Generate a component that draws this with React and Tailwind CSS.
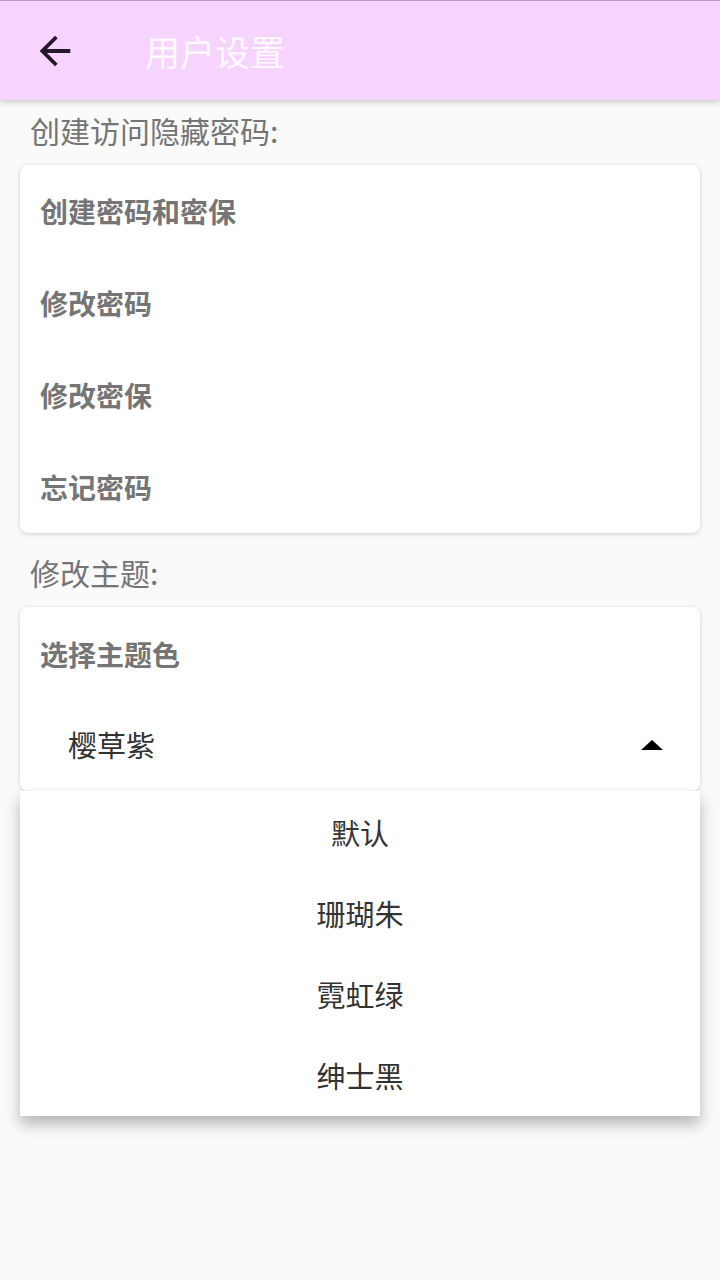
import { useState } from 'react'

const FONT = { fontFamily: '"Noto Sans CJK SC", "Noto Sans", sans-serif' }

const passwordItems = ['创建密码和密保', '修改密码', '修改密保', '忘记密码']
const themes = ['默认', '珊瑚朱', '霓虹绿', '绅士黑']

export default function App() {
  const [theme, setTheme] = useState('樱草紫')
  const [open, setOpen] = useState(true)

  return (
    <div className="w-[720px] h-[1280px] bg-[#fafafa] overflow-hidden" style={FONT}>
      <header className="relative z-10 h-[100px] bg-[#f6d4fd] border-t border-[#b39bc4] flex items-center shadow-[0_2px_6px_rgba(0,0,0,0.22)]">
        <button className="pl-[32px] flex items-center">
          <svg width="46" height="46" viewBox="0 0 24 24">
            <path d="M20 11H7.83l5.59-5.59L12 4l-8 8 8 8 1.41-1.41L7.83 13H20v-2z" fill="#251a29" />
          </svg>
        </button>
        <h1 className="ml-[67px] text-[35px] text-white/85 leading-none">用户设置</h1>
      </header>

      <p className="pl-[30px] pt-[14px] text-[30px] text-[#757575] leading-[32px]">创建访问隐藏密码:</p>

      <div className="mx-[20px] mt-[19px] bg-white rounded-lg shadow-[0_1px_4px_rgba(0,0,0,0.18)]">
        {passwordItems.map(item => (
          <div key={item} className="h-[92px] flex items-center px-[20px] text-[28px] font-bold text-[#757575]">
            {item}
          </div>
        ))}
      </div>

      <p className="pl-[30px] pt-[23px] text-[30px] text-[#757575] leading-[32px]">修改主题:</p>

      <div className="relative mx-[20px] mt-[19px]">
        <div className="bg-white rounded-lg shadow-[0_1px_4px_rgba(0,0,0,0.18)] h-[184px] flex flex-col">
          <div className="h-[94px] flex items-center px-[20px] text-[28px] font-bold text-[#757575]">
            选择主题色
          </div>
          <button
            onClick={() => setOpen(!open)}
            className="flex-1 flex items-center justify-between pl-[48px] pr-[37px] pb-[2px]"
          >
            <span className="text-[29px] text-[#333]">{theme}</span>
            <svg width="22" height="10" viewBox="0 0 22 10">
              <path d={open ? 'M0 10L11 0L22 10Z' : 'M0 0L11 10L22 0Z'} fill="#000" />
            </svg>
          </button>
        </div>

        {open && (
          <ul className="absolute left-0 right-0 top-[184px] bg-white shadow-[0_8px_14px_rgba(0,0,0,0.28)] pt-[1px]">
            {themes.map(t => (
              <li
                key={t}
                onClick={() => { setTheme(t); setOpen(false) }}
                className="h-[81px] flex items-center justify-center text-[29px] text-[#333]"
              >
                {t}
              </li>
            ))}
          </ul>
        )}
      </div>
    </div>
  )
}
